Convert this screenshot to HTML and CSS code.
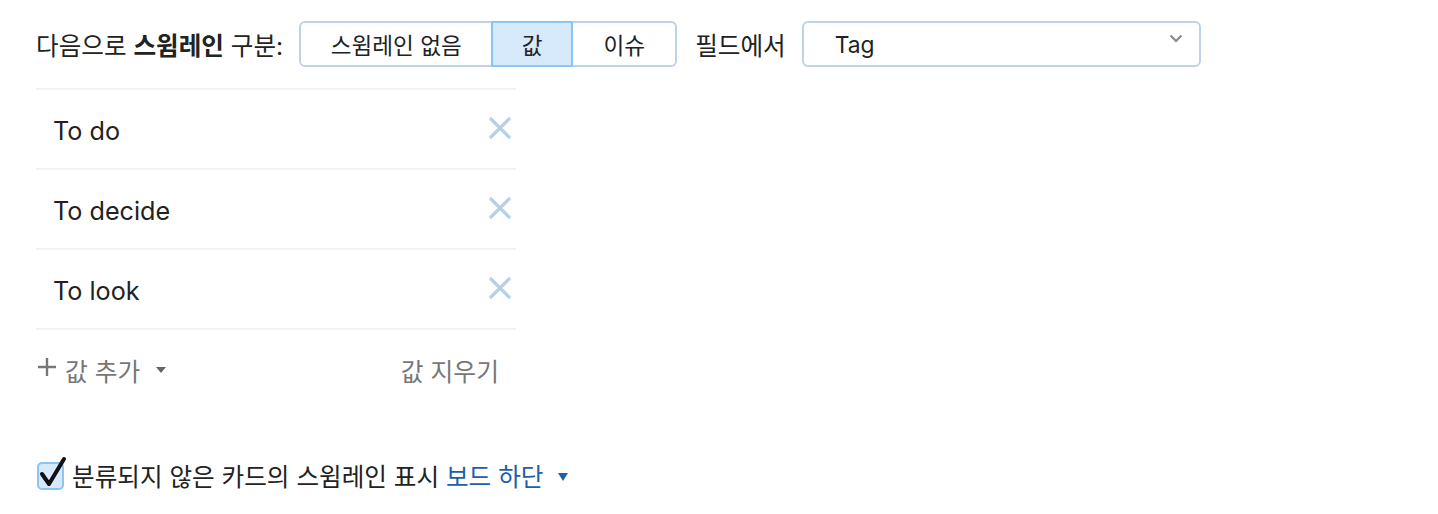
FILE: index.html
```html
<!DOCTYPE html>
<html lang="ko">
<head>
<meta charset="utf-8">
<link rel="stylesheet" href="styles.css">
</head>
<body>
<div class="page">
  <div class="toprow">
    <span class="label">다음으로 <b>스윔레인</b> 구분:</span>
    <div class="seg">
      <span class="seg-btn seg-first">스윔레인 없음</span>
      <span class="seg-btn seg-active">값</span>
      <span class="seg-btn seg-last">이슈</span>
    </div>
    <span class="field-label">필드에서</span>
    <div class="select">
      <span class="select-text">Tag</span>
      <svg class="chev" width="14" height="9" viewBox="0 0 14 9"><path d="M1.5 1.5 L7 7 L12.5 1.5" fill="none" stroke="#8a8a8a" stroke-width="2.2"/></svg>
    </div>
  </div>

  <div class="values">
    <div class="value-row"><span class="value-text">To do</span><svg class="x" width="24" height="24" viewBox="0 0 24 24"><path d="M2 2 L22 22 M22 2 L2 22" stroke="#b7d0e8" stroke-width="3.2"/></svg></div>
    <div class="value-row"><span class="value-text">To decide</span><svg class="x" width="24" height="24" viewBox="0 0 24 24"><path d="M2 2 L22 22 M22 2 L2 22" stroke="#b7d0e8" stroke-width="3.2"/></svg></div>
    <div class="value-row"><span class="value-text">To look</span><svg class="x" width="24" height="24" viewBox="0 0 24 24"><path d="M2 2 L22 22 M22 2 L2 22" stroke="#b7d0e8" stroke-width="3.2"/></svg></div>
    <div class="values-foot">
      <span class="add"><svg class="plus" width="18" height="18" viewBox="0 0 18 18"><path d="M9 0 V18 M0 9 H18" stroke="#777" stroke-width="2.4"/></svg> 값 추가 <span class="tri tri-gray"></span></span>
      <span class="clear">값 지우기</span>
    </div>
  </div>

  <div class="check-row">
    <span class="checkbox">
      <svg class="tick" width="30" height="34" viewBox="0 0 30 34"><path d="M4 19 L11 29 L26 4" fill="none" stroke="#111" stroke-width="4" stroke-linecap="round" stroke-linejoin="round"/></svg>
    </span>
    <span class="check-text">분류되지 않은 카드의 스윔레인 표시 <span class="link">보드 하단</span></span>
    <span class="tri tri-blue"></span>
  </div>
</div>
</body>
</html>
```

FILE: styles.css
```css
* { box-sizing: border-box; }
body {
  margin: 0;
  background: #fff;
  font-family: Inter, "Noto Sans CJK KR", sans-serif;
  color: #222;
}
.page {
  padding: 21px 36px;
}
.toprow {
  display: flex;
  align-items: center;
  height: 46px;
}
.label {
  font-size: 24.6px;
  margin-right: 16px;
}
.label b { font-weight: 700; }
.seg {
  display: flex;
  height: 46px;
}
.seg-btn {
  display: flex;
  align-items: center;
  justify-content: center;
  font-size: 22.6px;
  border: 2px solid #bfd3e8;
  border-left: none;
  background: #fff;
  color: #222;
}
.seg-first {
  width: 194px;
  border-left: 2px solid #bfd3e8;
  border-radius: 6px 0 0 6px;
}
.seg-active {
  width: 82px;
  background: #d6eafc;
  border: 2px solid #8cc4f2;
  margin-left: -2px;
}
.seg-last {
  width: 104px;
  border-radius: 0 6px 6px 0;
}
.field-label {
  font-size: 24.6px;
  margin-left: 18px;
  margin-right: 16px;
}
.select {
  width: 399px;
  height: 46px;
  border: 2px solid #bfd3e8;
  border-radius: 6px;
  display: flex;
  align-items: center;
  justify-content: space-between;
  padding: 0 16px 0 31px;
}
.select-text {
  font-size: 22.8px;
  color: #222;
  margin-top: 1px;
}
.chev {
  align-self: flex-start;
  margin-top: 11px;
}
.values {
  width: 480px;
  margin-top: 21px;
  border-top: 2px solid #f3f3f3;
}
.value-row {
  height: 80px;
  border-bottom: 2px solid #f3f3f3;
  display: flex;
  align-items: center;
  justify-content: space-between;
  padding: 0 4px 0 17px;
}
.value-text {
  font-size: 25.2px;
  color: #222;
  margin-top: 4px;
}
.x { margin-top: -2px; }
.values-foot {
  display: flex;
  align-items: center;
  justify-content: space-between;
  height: 80px;
  padding: 0 17px 0 2px;
  color: #777;
  font-size: 24.8px;
}
.add { display: flex; align-items: center; }
.plus {
  margin-right: 9px;
  margin-top: -6px;
}
.tri {
  display: inline-block;
  width: 0;
  height: 0;
  border-left: 5px solid transparent;
  border-right: 5px solid transparent;
}
.tri-gray {
  border-top: 6px solid #666;
  margin-left: 16px;
}
.tri-blue {
  border-top: 8px solid #1d5fa8;
  border-left-width: 5px;
  border-right-width: 5px;
  margin-left: 15px;
  margin-top: 3px;
}
.check-row {
  display: flex;
  align-items: center;
  margin-top: 47px;
}
.checkbox {
  position: relative;
  width: 27px;
  height: 28px;
  margin-left: 1px;
  margin-top: 2px;
  border: 2px solid #8cc4f2;
  background: #d6eafc;
  border-radius: 5px;
  margin-right: 8px;
}
.tick {
  position: absolute;
  left: -1px;
  top: -9px;
}
.check-text {
  font-size: 24.6px;
  color: #222;
}
.link { color: #1d5fa8; }
```
